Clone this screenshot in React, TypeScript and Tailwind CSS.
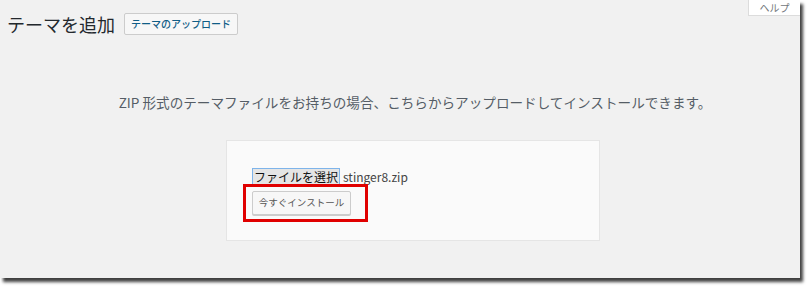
const jp = "font-['Noto_Sans_CJK_JP','Noto_Sans',sans-serif]";

const HelpTab = () => (
  <div className="absolute right-0 top-0 flex h-[16px] w-[52px] items-center justify-center border-b border-l border-[#dcdcdc] bg-white text-[10px] leading-none text-[#72777c]">
    ヘルプ
  </div>
);

export default function App() {
  return (
    <div className={`h-[287px] w-[808px] bg-white ${jp}`}>
      <div className="relative h-[278px] w-[800px] bg-[#f1f1f1] shadow-[3px_4px_3px_rgba(0,0,0,0.75)]">
        <HelpTab />

        <div className="flex items-center gap-[9px] pl-[7px] pt-[11px]">
          <h1 className="text-[18px] leading-[26px] text-[#23282d]">テーマを追加</h1>
          <button className="h-[22px] rounded-[2px] border border-[#cccccc] bg-[#f7f7f7] px-[6px] text-[10px] font-medium leading-none text-[#0f5d86]">
            テーマのアップロード
          </button>
        </div>

        <p className="mt-[55px] pl-[30px] text-center text-[13.6px] leading-[20px] text-[#555d66]">
          ZIP 形式のテーマファイルをお持ちの場合、こちらからアップロードしてインストールできます。
        </p>

        <div className="mt-[28px] flex justify-center pl-[26px]">
          <div className="relative h-[101px] w-[374px] border border-[#e5e5e5] bg-[#fafafa] pl-[25px] pt-[27px]">
            <div className="flex items-center gap-[3px]">
              <span className="flex h-[18px] w-[88px] items-center justify-center border border-[#7eb4ea] bg-[#e5e5e5] text-[12px] leading-none text-[#111]">
                ファイルを選択
              </span>
              <span className="text-[12px] leading-none text-[#444]">stinger8.zip</span>
            </div>
            <button className="mt-[5px] flex h-[24px] w-[99px] items-center justify-center rounded-[2px] border border-[#cccccc] bg-[#f7f7f7] text-[9.5px] leading-none text-[#555] shadow-[0_1px_0_#cccccc]">
              今すぐインストール
            </button>

            <div className="pointer-events-none absolute left-[16px] top-[43px] h-[38px] w-[125px] border-[3px] border-[#e00000]" />
          </div>
        </div>
      </div>
    </div>
  );
}
